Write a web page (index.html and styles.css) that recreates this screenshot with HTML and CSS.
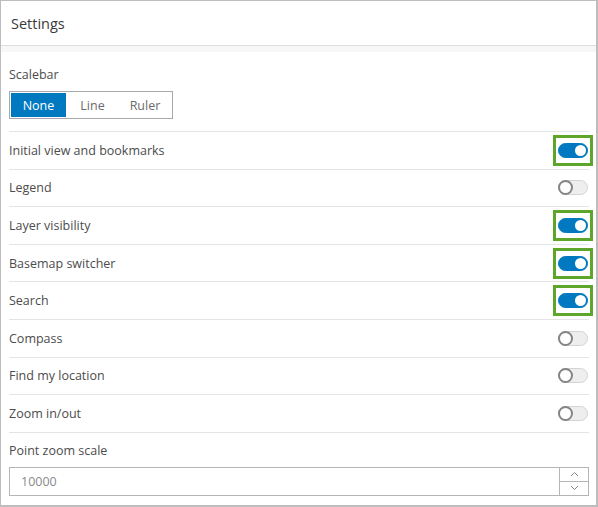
FILE: index.html
```html
<!DOCTYPE html>
<html>
<head>
<meta charset="utf-8">
<link rel="stylesheet" href="styles.css">
</head>
<body>
<div class="panel">
  <div class="header">Settings</div>
  <div class="band"></div>
  <div class="content">
    <div class="field">
      <div class="label">Scalebar</div>
      <div class="seg">
        <span class="seg-item active">None</span>
        <span class="seg-item">Line</span>
        <span class="seg-item">Ruler</span>
      </div>
    </div>
    <div class="rows">
      <div class="row"><span>Initial view and bookmarks</span><span class="hl"><span class="toggle on"></span></span></div>
      <div class="row"><span>Legend</span><span class="nohl"><span class="toggle"></span></span></div>
      <div class="row"><span>Layer visibility</span><span class="hl"><span class="toggle on"></span></span></div>
      <div class="row"><span>Basemap switcher</span><span class="hl"><span class="toggle on"></span></span></div>
      <div class="row"><span>Search</span><span class="hl"><span class="toggle on"></span></span></div>
      <div class="row"><span>Compass</span><span class="nohl"><span class="toggle"></span></span></div>
      <div class="row"><span>Find my location</span><span class="nohl"><span class="toggle"></span></span></div>
      <div class="row"><span>Zoom in/out</span><span class="nohl"><span class="toggle"></span></span></div>
    </div>
    <div class="field zoom">
      <div class="label">Point zoom scale</div>
      <div class="numinput">
        <span class="value">10000</span>
        <span class="spin">
          <span class="spin-btn"><svg width="9" height="6" viewBox="0 0 9 6"><path d="M1 5 L4.5 1.5 L8 5" fill="none" stroke="#888" stroke-width="1"/></svg></span>
          <span class="spin-btn"><svg width="9" height="6" viewBox="0 0 9 6"><path d="M1 1 L4.5 4.5 L8 1" fill="none" stroke="#888" stroke-width="1"/></svg></span>
        </span>
      </div>
    </div>
  </div>
</div>
</body>
</html>
```
FILE: styles.css
```css
* { box-sizing: border-box; }
html, body { margin: 0; padding: 0; background: #fff; }
body { font-family: "Open Sans", "Noto Sans", sans-serif; color: #4c4c4c; font-size: 12.5px; }
.panel {
  width: 598px; height: 507px;
  border: 1px solid #bdbdbd;
  border-right-width: 2px;
  border-bottom-width: 2px;
  display: flex; flex-direction: column;
}
.header {
  height: 45px; padding: 0 10px;
  display: flex; align-items: center;
  font-size: 14.5px; color: #3a3a3a;
  border-bottom: 1px solid #dedede;
}
.band { height: 6px; background: #f7f7f7; }
.content { padding: 0 7px 0 8px; flex: 1; display: flex; flex-direction: column; }
.field { padding-top: 15px; }
.label { line-height: 16px; margin-bottom: 8px; }
.seg { display: inline-flex; border: 1px solid #a9a9a9; height: 28px; padding: 1px; }
.seg-item { display: flex; align-items: center; justify-content: center; color: #6b6b6b; }
.seg-item.active { background: #0079c1; color: #fff; width: 55px; }
.seg-item:nth-child(2) { width: 53px; }
.seg-item:nth-child(3) { width: 52px; }
.rows { margin-top: 12px; border-top: 1px solid #e4e4e4; }
.row {
  height: 37.6px; border-bottom: 1px solid #e4e4e4;
  display: flex; align-items: center; justify-content: space-between;
}
.hl, .nohl { width: 40px; height: 31px; display: flex; align-items: center; justify-content: center; margin-right: -4px; }
.hl { border: 3px solid #5ea629; }
.toggle {
  width: 30px; height: 15px; border-radius: 8px;
  background: #eeeeee; border: 1px solid #d4d4d4;
  position: relative;
}
.toggle::after {
  content: ""; position: absolute; top: -1px; left: -1px;
  width: 15px; height: 15px; border-radius: 50%;
  background: #fff; border: 2px solid #858585; box-sizing: border-box;
}
.toggle.on { background: #0079c1; border-color: #0079c1; }
.toggle.on::after { left: auto; right: 1px; top: 1px; width: 11px; height: 11px; border: none; }
.zoom { padding-top: 10px; }
.zoom .label { margin-bottom: 8px; }
.numinput {
  height: 29px; border: 1px solid #b5b5b5;
  display: flex; justify-content: space-between;
}
.value { padding-left: 11px; display: flex; align-items: center; color: #8a8a8a; }
.spin { width: 29px; border-left: 1px solid #b5b5b5; display: flex; flex-direction: column; }
.spin-btn { flex: 1; display: flex; align-items: center; justify-content: center; }
.spin-btn + .spin-btn { border-top: 1px solid #b5b5b5; }
```
